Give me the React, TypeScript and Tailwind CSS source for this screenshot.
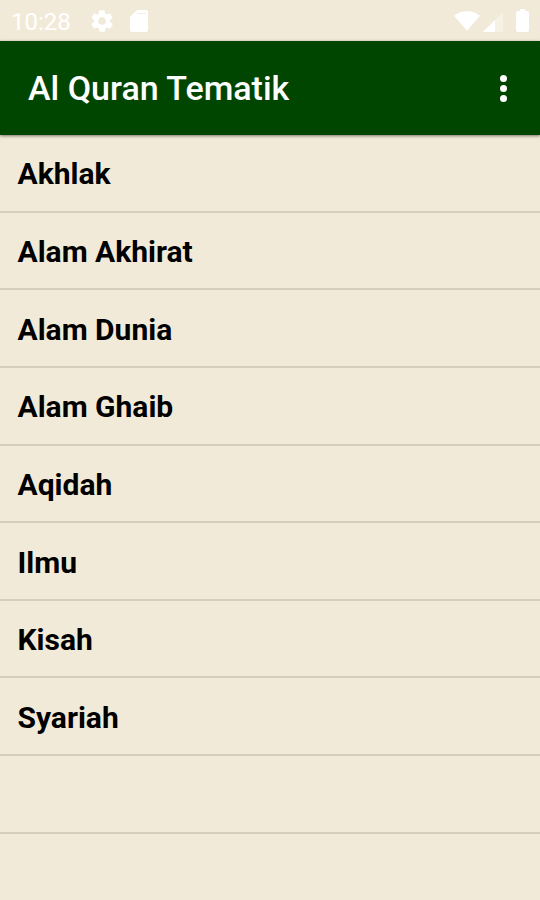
const topics = [
  "Akhlak",
  "Alam Akhirat",
  "Alam Dunia",
  "Alam Ghaib",
  "Aqidah",
  "Ilmu",
  "Kisah",
  "Syariah",
  "",
];

export default function App() {
  return (
    <div className="flex h-[900px] w-[540px] flex-col overflow-hidden bg-[#f2ead8] font-['Roboto',sans-serif]">
      <StatusBar />
      <header className="z-10 flex h-[94px] shrink-0 items-center justify-between bg-[#004600] pr-[33px] pl-[28px] shadow-[0_1px_3px_rgba(0,0,0,0.5)]">
        <h1 className="pt-[1px] text-[34px] font-medium text-white">Al Quran Tematik</h1>
        <button aria-label="Menu" className="flex flex-col gap-[3px]">
          <Dot />
          <Dot />
          <Dot />
        </button>
      </header>
      <ul>
        {topics.map((topic, i) => (
          <li
            key={i}
            className="flex h-[77.65px] items-center border-b-2 border-[#d6cebc] pt-[2px] pl-[17.5px] text-[30px] font-bold text-black"
          >
            {topic}
          </li>
        ))}
      </ul>
    </div>
  );
}

function StatusBar() {
  return (
    <div className="flex h-[41px] shrink-0 items-center justify-between pr-[11px] pl-[11px] text-white">
      <div className="flex items-center">
        <span className="w-[78px] pt-[2px] text-[24px]">10:28</span>
        {/* Settings */}
        <svg className="mt-[1px] h-[26px] w-[26px]" viewBox="0 0 24 24" fill="currentColor">
          <path d="M19.4 13c0-.3.1-.6.1-1s0-.7-.1-1l2.100-1.600c.2-.1.2-.4.1-.6l-2-3.500c-.1-.2-.4-.3-.6-.2l-2.500 1c-.5-.4-1.100-.7-1.700-1l-.4-2.600c0-.3-.2-.5-.5-.5h-4c-.2 0-.4.2-.5.4l-.4 2.700c-.6.2-1.100.6-1.700 1L5 5c-.2-.1-.5 0-.6.2l-2 3.500c-.1.2 0 .5.1.6L4.600 11c0 .3-.1.7-.1 1s0 .7.1 1l-2.100 1.600c-.2.2-.2.4-.1.6l2 3.500c.1.2.4.3.6.2l2.500-1c.5.4 1.100.7 1.700 1l.4 2.600c0 .3.2.5.5.5h4c.2 0 .4-.2.5-.4l.4-2.700c.6-.2 1.100-.6 1.700-1l2.500 1c.2.1.5 0 .6-.2l2-3.500c.1-.2.1-.5-.1-.6L19.400 13zM12 15.500a3.500 3.500 0 1 1 0-7 3.500 3.500 0 0 1 0 7z" />
        </svg>
        {/* SD card */}
        <svg className="mt-[1px] ml-[15px] h-[22px] w-[18px]" viewBox="0 0 18 22" fill="currentColor">
          <path d="M7 0h9q2 0 2 2v18q0 2-2 2H2q-2 0-2-2V7z" />
          <path d="M7 3.500h9" stroke="#f2ead8" strokeWidth="1" opacity=".6" />
        </svg>
      </div>
      <div className="flex items-center">
        {/* Wifi */}
        <svg className="h-[20px] w-[26px]" viewBox="0 0 27 20" fill="currentColor">
          <path d="M0 4.500C8 -1.500 19 -1.500 27 4.500L13.500 20z" />
        </svg>
        {/* Signal */}
        <svg className="mt-[2px] ml-[3px] h-[20px] w-[20px]" viewBox="0 0 20 20" fill="currentColor">
          <path opacity=".35" d="M0 20L20 0v20z" />
          <path d="M0 20L12 8V20z" />
        </svg>
        {/* Battery */}
        <svg className="mb-[1px] ml-[13px] h-[23px] w-[13px]" viewBox="0 0 13 23" fill="currentColor">
          <path d="M4 0h5v2h2q2 0 2 2v17q0 2-2 2H2Q0 23 0 21V4Q0 2 2 2H4z" />
        </svg>
      </div>
    </div>
  );
}

function Dot() {
  return <span className="h-[7px] w-[7px] rounded-full bg-white" />;
}
